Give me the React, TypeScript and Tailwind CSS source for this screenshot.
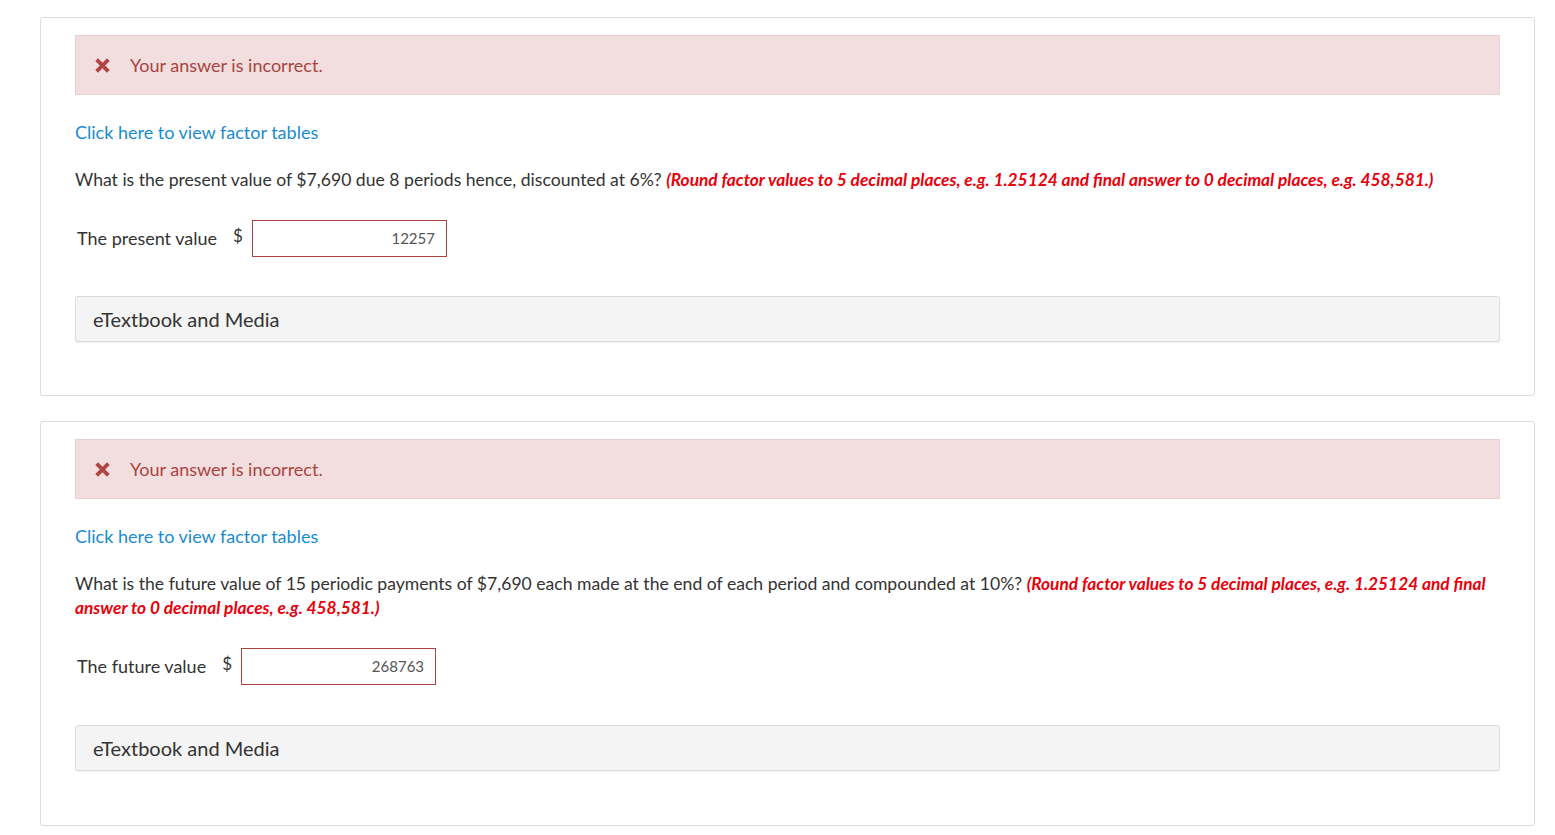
import React from "react";

const XIcon = () => (
  <svg width="17" height="17" viewBox="0 0 16 16" className="shrink-0">
    <path d="M2.5 2.5 L13.5 13.5 M13.5 2.5 L2.5 13.5" stroke="#b04543" strokeWidth="3.6" strokeLinecap="butt" />
  </svg>
);

function Card({
  question,
  label,
  value,
  boxGap,
  bottomPad,
}: {
  question: React.ReactNode;
  label: string;
  value: string;
  boxGap: string;
  bottomPad: string;
}) {
  return (
    <div className={`border border-[#dcdcdc] rounded-[3px] bg-white px-[34px] pt-[17px] ${bottomPad}`}>
      <div className="h-[60px] bg-[#f2dede] border border-[#ebcfd3] flex items-center pl-[18px] gap-[19px]">
        <XIcon />
        <span className="text-[18px] text-[#a94442]">Your answer is incorrect.</span>
      </div>
      <div className="mt-[25px] text-[18px] leading-[24px] text-[#1a8bd0]">Click here to view factor tables</div>
      <div className="mt-[24px] text-[17.6px] leading-[24px] text-[#333]">{question}</div>
      <div className="flex items-center mt-[28px] pl-[2px]">
        <span className="text-[18px] text-[#333] mr-[16px]">{label}</span>
        <span className="text-[17px] text-[#333] mr-[9px] -mt-[6px]">$</span>
        <div className="w-[195px] h-[37px] border border-[#a94442] flex items-center justify-end pr-[11px] text-[15px] text-[#555]">
          {value}
        </div>
      </div>
      <div className={`${boxGap} h-[46px] bg-[#f4f4f4] border border-[#dcdcdc] rounded-[3px] shadow-[0_1px_1px_rgba(0,0,0,0.06)] flex items-center pl-[17px] text-[20px] text-[#333]`}>
        eTextbook and Media
      </div>
    </div>
  );
}

const Red = ({ children }: { children: React.ReactNode }) => (
  <span className="text-[#e8000b] font-bold italic text-[17.3px]">{children}</span>
);

export default function App() {
  return (
    <div className="min-h-screen bg-white pt-[17px] pl-[40px] pr-[20px]" style={{ fontFamily: "Lato, 'Open Sans', sans-serif" }}>
      <Card
        question={
          <>
            What is the present value of $7,690 due 8 periods hence, discounted at 6%?{" "}
            <Red>(Round factor values to 5 decimal places, e.g. 1.25124 and final answer to 0 decimal places, e.g. 458,581.)</Red>
          </>
        }
        label="The present value"
        value="12257"
        boxGap="mt-[39px]"
        bottomPad="pb-[53px]"
      />
      <div className="h-[25px]" />
      <Card
        question={
          <>
            What is the future value of 15 periodic payments of $7,690 each made at the end of each period and compounded at 10%?{" "}
            <Red>(Round factor values to 5 decimal places, e.g. 1.25124 and final answer to 0 decimal places, e.g. 458,581.)</Red>
          </>
        }
        label="The future value"
        value="268763"
        boxGap="mt-[40px]"
        bottomPad="pb-[54px]"
      />
    </div>
  );
}
